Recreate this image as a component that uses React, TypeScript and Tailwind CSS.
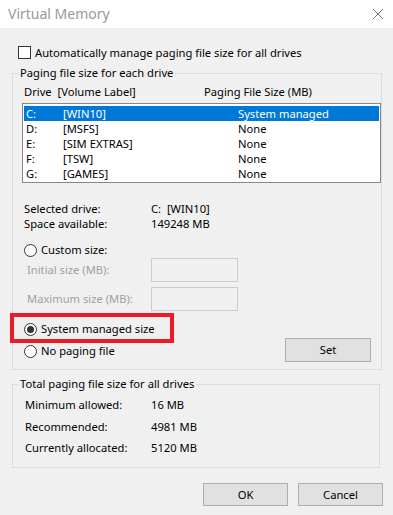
import React from "react";

const font = { fontFamily: '"Noto Sans", "Open Sans", Arial, sans-serif' };

function Radio({ checked }: { checked?: boolean }) {
  return (
    <span className="w-[13px] h-[13px] rounded-full border border-[#333333] bg-white flex items-center justify-center shrink-0">
      {checked && <span className="w-[7px] h-[7px] rounded-full bg-[#333333]" />}
    </span>
  );
}

const drives = [
  ["C:", "[WIN10]", "System managed"],
  ["D:", "[MSFS]", "None"],
  ["E:", "[SIM EXTRAS]", "None"],
  ["F:", "[TSW]", "None"],
  ["G:", "[GAMES]", "None"],
];

export default function App() {
  return (
    <div className="w-[393px] h-[515px] bg-[#f0f0f0] text-[11.2px] text-black overflow-hidden" style={font}>
      {/* Title bar */}
      <div className="h-[28px] bg-white flex items-center justify-between">
        <span className="ml-[8px] text-[14px] leading-[20px] text-[#999999]">Virtual Memory</span>
        <svg width="12" height="12" viewBox="0 0 12 12" className="mr-[9px]">
          <path d="M1 1 L11 11 M11 1 L1 11" stroke="#777777" strokeWidth="1" />
        </svg>
      </div>

      {/* Auto manage checkbox */}
      <div className="mt-[18px] ml-[18px] h-[13px] flex items-center gap-[4px]">
        <span className="w-[13px] h-[13px] border border-[#333333] bg-white shrink-0" />
        <span className="leading-[14px]">Automatically manage paging file size for all drives</span>
      </div>

      {/* Group 1 */}
      <fieldset className="mt-[6px] ml-[12px] w-[368px] border border-[#dcdcdc] pl-[9px] pr-0 pb-[7px] m-0">
        <legend className="ml-[-4px] px-[2px] leading-[16px]">Paging file size for each drive</legend>
        <div className="mt-[3px] h-[16px] flex items-center leading-[14px]">
          <span className="ml-[2px] w-[180px]">Drive&nbsp; [Volume Label]</span>
          <span>Paging File Size (MB)</span>
        </div>
        <div className="mt-[3px] w-[359px] h-[80px] border border-[#828790] bg-white pt-[2px] px-[1px]">
          {drives.map(([d, l, s], i) => (
            <div
              key={d}
              className={`h-[15px] flex items-center leading-[14px] ${i === 0 ? "bg-[#0078d7] text-white" : ""}`}
            >
              <span className="ml-[2px] w-[37px]">{d}</span>
              <span className="w-[175px]">{l}</span>
              <span>{s}</span>
            </div>
          ))}
        </div>

        <div className="mt-[18px] h-[15px] flex items-center leading-[14px]">
          <span className="ml-[2px] w-[127px]">Selected drive:</span>
          <span>C:&nbsp; [WIN10]</span>
        </div>
        <div className="h-[15px] flex items-center leading-[14px]">
          <span className="ml-[2px] w-[127px]">Space available:</span>
          <span>149248 MB</span>
        </div>

        <div className="mt-[11px] h-[16px] ml-[2px] flex items-center gap-[4px] leading-[14px]">
          <Radio />
          <span>Custom size:</span>
        </div>
        <div className="h-[24px] flex items-center leading-[14px]">
          <span className="ml-[5px] w-[124px] text-[#a0a0a0]">Initial size (MB):</span>
          <span className="w-[87px] h-[24px] border border-[#cccccc] bg-[#f0f0f0]" />
        </div>
        <div className="mt-[5px] h-[24px] flex items-center leading-[14px]">
          <span className="ml-[5px] w-[124px] text-[#a0a0a0]">Maximum size (MB):</span>
          <span className="w-[87px] h-[24px] border border-[#cccccc] bg-[#f0f0f0]" />
        </div>

        <div className="mt-[10px] h-[41px] flex justify-between">
          <div className="flex flex-col ml-[2px]">
            <div className="relative h-[16px] flex items-center gap-[4px] leading-[14px]">
              <Radio checked />
              <span>System managed size</span>
              <span className="absolute left-[-14px] top-[-8px] w-[164px] h-[30px] border-[4px] border-[#ed1c24]" />
            </div>
            <div className="mt-[6px] h-[16px] flex items-center gap-[4px] leading-[14px]">
              <Radio />
              <span>No paging file</span>
            </div>
          </div>
          <button className="self-end mr-[10px] w-[86px] h-[24px] border border-[#adadad] bg-[#e1e1e1] leading-[20px]">
            Set
          </button>
        </div>
      </fieldset>

      {/* Group 2 */}
      <fieldset className="mt-[6px] ml-[12px] w-[368px] border border-[#dcdcdc] pl-[9px] pr-0 pb-[11px] m-0">
        <legend className="ml-[-4px] px-[2px] leading-[16px]">Total paging file size for all drives</legend>
        <div className="mt-[5px] h-[16px] flex items-center leading-[14px]">
          <span className="ml-[3px] w-[126px]">Minimum allowed:</span>
          <span>16 MB</span>
        </div>
        <div className="mt-[6px] h-[16px] flex items-center leading-[14px]">
          <span className="ml-[3px] w-[126px]">Recommended:</span>
          <span>4981 MB</span>
        </div>
        <div className="mt-[5px] h-[16px] flex items-center leading-[14px]">
          <span className="ml-[3px] w-[126px]">Currently allocated:</span>
          <span>5120 MB</span>
        </div>
      </fieldset>

      {/* Buttons */}
      <div className="mt-[15px] flex justify-end gap-[10px] pr-[10px]">
        <button className="w-[85px] h-[23px] border border-[#adadad] bg-[#e1e1e1] leading-[20px]">OK</button>
        <button className="w-[85px] h-[23px] border border-[#adadad] bg-[#e1e1e1] leading-[20px]">Cancel</button>
      </div>
    </div>
  );
}
